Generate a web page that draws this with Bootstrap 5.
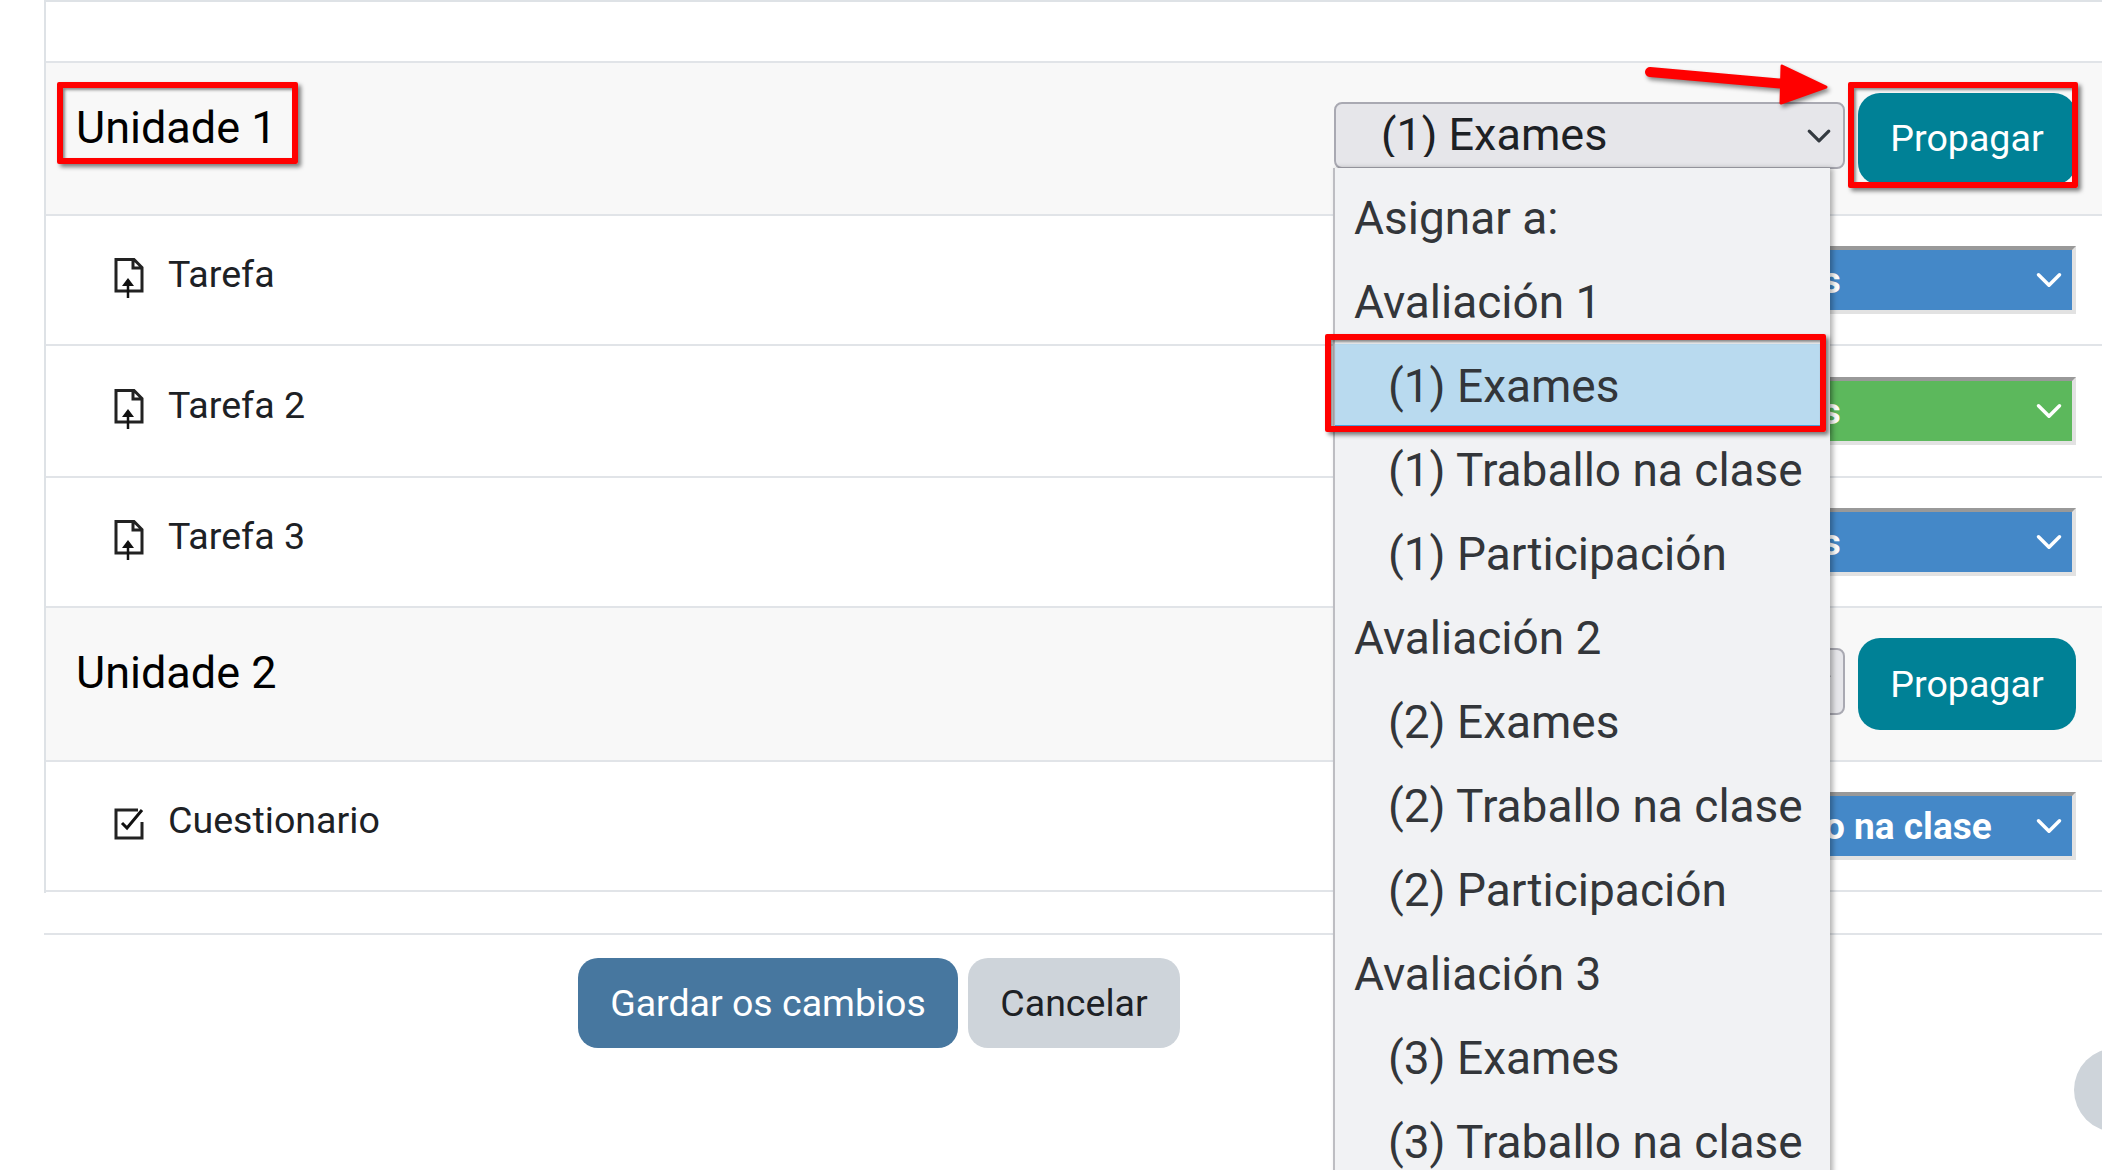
<!DOCTYPE html>
<html lang="en">
<head>
    <meta charset="UTF-8">
    <meta name="viewport" content="width=device-width, initial-scale=1.0">
    <title>Unidades</title>
    <link href="https://cdn.jsdelivr.net/npm/bootstrap@5.3.0/dist/css/bootstrap.min.css" rel="stylesheet">
    <style>
        html, body {
            height: 1170px;
            overflow: hidden;
        }
        body {
            background-color: #fff;
            font-family: Roboto, "Liberation Sans", sans-serif;
            color: #1d2125;
            position: relative;
        }
        .page-wrap { margin-left: 44px; }
        .grid-box {
            height: 893px;
            border-left: 2px solid #dee2e6;
            border-top: 2px solid #dee2e6;
        }
        .grid-row {
            border-bottom: 2px solid #e1e4e8;
            padding-right: 26px;
        }
        .row-empty { height: 61px; }
        .row-unit { height: 153px; background-color: #f8f8f8; }
        .row-unit-two { height: 154px; background-color: #f8f8f8; }
        .row-task { height: 130px; }
        .row-task-tall { height: 132px; }
        .unit-name {
            font-size: 45px;
            font-weight: 400;
            color: #000;
            margin: 0 0 22px 30px;
            line-height: 1.2;
        }
        .task-name {
            font-size: 37.6px;
            margin: 0 0 12px 0;
            padding-left: 68px;
            gap: 24px;
            color: #1d2125;
        }
        .task-name svg { flex: none; margin-top: 8px; }
        .select-grey {
            width: 511px;
            height: 67px;
            padding: 0 60px 3px 45px;
            font-size: 45px;
            line-height: 1;
            color: #1d2125;
            background-color: #e6e6ea;
            border: 2px solid #a9a9b2;
            border-radius: 8px;
            background-size: 26px 26px;
            background-position: right 11px center;
            margin-bottom: 6px;
        }
        .select-state {
            width: 742px;
            height: 68px;
            padding: 0 60px 0 316px;
            font-size: 37px;
            font-weight: 700;
            line-height: 1;
            color: #fff;
            border-style: solid;
            border-width: 4px;
            border-color: #999 #e2e2e2 #e2e2e2 #e2e2e2;
            border-radius: 0;
            background-size: 28px 28px;
            background-position: right 9px center;
            background-image: url("data:image/svg+xml,%3csvg xmlns='http://www.w3.org/2000/svg' viewBox='0 0 16 16'%3e%3cpath fill='none' stroke='%23fff' stroke-linecap='round' stroke-linejoin='round' stroke-width='2' d='m2 5 6 6 6-6'/%3e%3c/svg%3e");
        }
        .state-blue { background-color: #4488c8; }
        .state-green { background-color: #5cb85c; }
        .btn-propagate {
            width: 218px;
            height: 92px;
            font-size: 37.6px;
            color: #fff;
            background-color: #008196;
            border: 0;
            border-radius: 22px;
            margin-left: 13px;
        }
        .form-foot {
            border-top: 2px solid #e1e4e8;
            margin-top: 40px;
            padding: 23px 0 0 534px;
            gap: 10px;
        }
        .btn-save, .btn-cancel {
            height: 90px;
            padding: 0;
            font-size: 37.5px;
            border: 0;
            border-radius: 20px;
        }
        .btn-save { width: 380px; color: #fff; background-color: #47779f; }
        .btn-cancel { width: 212px; color: #1d2125; background-color: #ced4da; }

        /* open list of the first select */
        .grade-list {
            top: 168px;
            left: 1333px;
            width: 497px;
            height: 1010px;
            padding: 8px 0 0 0;
            border: 0;
            border-left: 2px solid #bdbdc2;
            border-radius: 0;
            background-color: #f1f2f4;
            box-shadow: 3px 0 5px rgba(0, 0, 0, .3);
            z-index: 5;
        }
        .grade-list .dropdown-item,
        .grade-list .dropdown-header {
            height: 84px;
            padding: 0 0 0 19px;
            font-size: 46px;
            font-weight: 400;
            line-height: 84px;
            color: #33363a;
            background: none;
            margin: 0;
        }
        .grade-list .dropdown-item { padding-left: 53px; }
        .grade-list .dropdown-item.active {
            background-color: #b9daef;
            border-bottom: 3px solid #4aa3e0;
            width: 488px;
        }
        .mark-box {
            position: absolute;
            border: 6px solid #f00;
            border-radius: 2px;
            box-shadow: 3px 3px 4px rgba(0, 0, 0, .5), inset 2px 2px 3px rgba(0, 0, 0, .45);
            z-index: 6;
        }
        .mark-unit { left: 57px; top: 82px; width: 241px; height: 82px; }
        .mark-item { left: 1325px; top: 334px; width: 501px; height: 98px; }
        .mark-btn { left: 1848px; top: 82px; width: 230px; height: 106px; }
        .mark-arrow {
            position: absolute;
            left: 1640px;
            top: 60px;
            filter: drop-shadow(2px 3px 2px rgba(0, 0, 0, .45));
            z-index: 6;
        }
        .side-round {
            position: absolute;
            left: 2074px;
            top: 1048px;
            width: 84px;
            height: 84px;
            border-radius: 50%;
            background-color: #ced4da;
        }
    </style>
</head>
<body>
    <div class="page-wrap">
        <div class="grid-box">
            <div class="grid-row row-empty"></div>

            <!-- Unidade 1 -->
            <div class="grid-row row-unit d-flex align-items-center">
                <h3 class="unit-name flex-grow-1">Unidade 1</h3>
                <select class="form-select select-grey">
                    <option selected>(1) Exames</option>
                    <option>(1) Traballo na clase</option>
                </select>
                <button type="button" class="btn btn-propagate">Propagar</button>
            </div>
            <div class="grid-row row-task d-flex align-items-center">
                <div class="task-name d-flex align-items-center flex-grow-1">
                    <svg width="30" height="40" viewBox="0 0 30 40"><path d="M2 1.5H20L28 9.5V33H2Z M19 1.5V10H28" fill="none" stroke="#222" stroke-width="3"/><path d="M14 22V40" stroke="#111" stroke-width="2.5"/><path d="M14 20 20 28H8Z" fill="#111"/></svg>
                    <span>Tarefa</span>
                </div>
                <select class="form-select select-state state-blue"><option>(1) Exames</option></select>
            </div>
            <div class="grid-row row-task-tall d-flex align-items-center">
                <div class="task-name d-flex align-items-center flex-grow-1">
                    <svg width="30" height="40" viewBox="0 0 30 40"><path d="M2 1.5H20L28 9.5V33H2Z M19 1.5V10H28" fill="none" stroke="#222" stroke-width="3"/><path d="M14 22V40" stroke="#111" stroke-width="2.5"/><path d="M14 20 20 28H8Z" fill="#111"/></svg>
                    <span>Tarefa 2</span>
                </div>
                <select class="form-select select-state state-green"><option>(2) Exames</option></select>
            </div>
            <div class="grid-row row-task d-flex align-items-center">
                <div class="task-name d-flex align-items-center flex-grow-1">
                    <svg width="30" height="40" viewBox="0 0 30 40"><path d="M2 1.5H20L28 9.5V33H2Z M19 1.5V10H28" fill="none" stroke="#222" stroke-width="3"/><path d="M14 22V40" stroke="#111" stroke-width="2.5"/><path d="M14 20 20 28H8Z" fill="#111"/></svg>
                    <span>Tarefa 3</span>
                </div>
                <select class="form-select select-state state-blue"><option>(1) Exames</option></select>
            </div>

            <!-- Unidade 2 -->
            <div class="grid-row row-unit-two d-flex align-items-center">
                <h3 class="unit-name flex-grow-1">Unidade 2</h3>
                <select class="form-select select-grey">
                    <option selected>(1) Exames</option>
                </select>
                <button type="button" class="btn btn-propagate">Propagar</button>
            </div>
            <div class="grid-row row-task d-flex align-items-center">
                <div class="task-name d-flex align-items-center flex-grow-1">
                    <svg width="30" height="32" viewBox="0 0 30 32"><path d="M24 2H2V30H28V14" fill="none" stroke="#222" stroke-width="3"/><path d="M8 15 13 20 28 2" fill="none" stroke="#111" stroke-width="3"/></svg>
                    <span>Cuestionario</span>
                </div>
                <select class="form-select select-state state-blue"><option>(1) Traballo na clase</option></select>
            </div>
        </div>

        <div class="form-foot d-flex">
            <button type="button" class="btn btn-save">Gardar os cambios</button>
            <button type="button" class="btn btn-cancel">Cancelar</button>
        </div>
    </div>

    <div class="dropdown-menu show grade-list">
        <h6 class="dropdown-header">Asignar a:</h6>
        <h6 class="dropdown-header">Avaliación 1</h6>
        <a class="dropdown-item active" href="#">(1) Exames</a>
        <a class="dropdown-item" href="#">(1) Traballo na clase</a>
        <a class="dropdown-item" href="#">(1) Participación</a>
        <h6 class="dropdown-header">Avaliación 2</h6>
        <a class="dropdown-item" href="#">(2) Exames</a>
        <a class="dropdown-item" href="#">(2) Traballo na clase</a>
        <a class="dropdown-item" href="#">(2) Participación</a>
        <h6 class="dropdown-header">Avaliación 3</h6>
        <a class="dropdown-item" href="#">(3) Exames</a>
        <a class="dropdown-item" href="#">(3) Traballo na clase</a>
    </div>

    <!-- annotations over the page -->
    <div class="mark-box mark-unit"></div>
    <div class="mark-box mark-item"></div>
    <div class="mark-box mark-btn"></div>
    <svg class="mark-arrow" width="195" height="50" viewBox="0 0 195 50"><path d="M10 12 146 24" stroke="#f00" stroke-width="10" stroke-linecap="round"/><path d="M142 6 186 27 141 43Z" fill="#f00" stroke="#f00" stroke-width="3" stroke-linejoin="round"/></svg>
    <div class="side-round"></div>

    <script src="https://cdn.jsdelivr.net/npm/bootstrap@5.3.0/dist/js/bootstrap.bundle.min.js"></script>
</body>
</html>
